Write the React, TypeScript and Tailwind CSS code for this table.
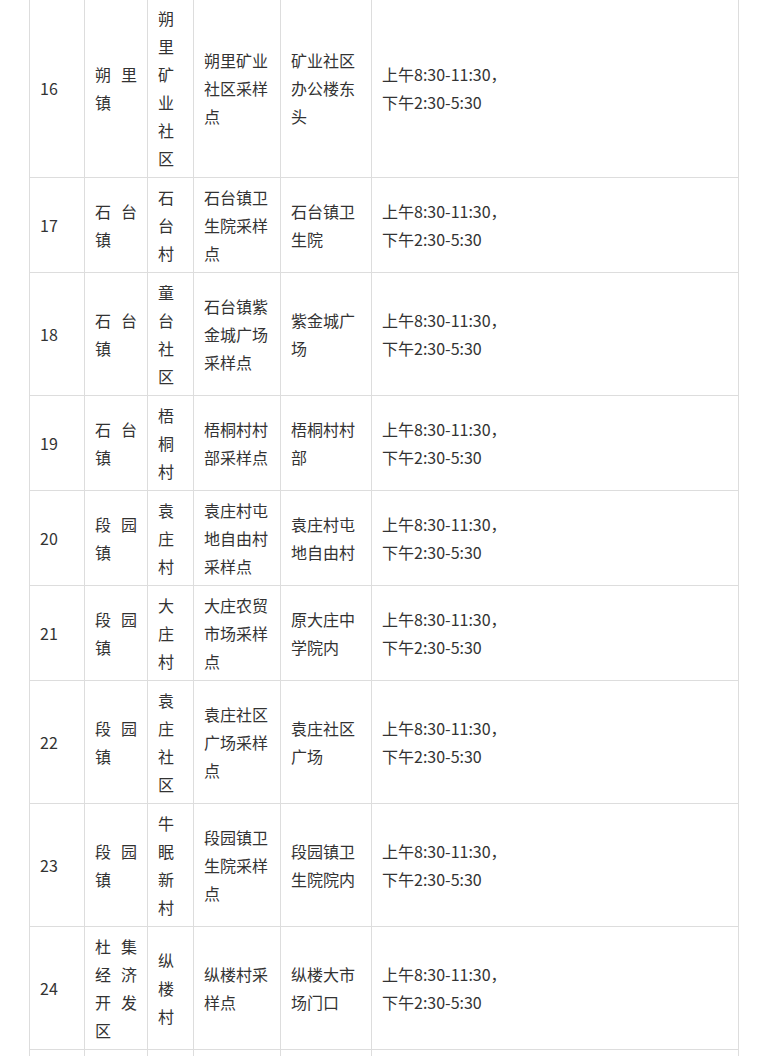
import React from "react";

type Row = [string, string, string, string, string];

const rows: Row[] = [
  ["16", "朔里镇", "朔里矿业社区", "朔里矿业社区采样点", "矿业社区办公楼东头"],
  ["17", "石台镇", "石台村", "石台镇卫生院采样点", "石台镇卫生院"],
  ["18", "石台镇", "童台社区", "石台镇紫金城广场采样点", "紫金城广场"],
  ["19", "石台镇", "梧桐村", "梧桐村村部采样点", "梧桐村村部"],
  ["20", "段园镇", "袁庄村", "袁庄村屯地自由村采样点", "袁庄村屯地自由村"],
  ["21", "段园镇", "大庄村", "大庄农贸市场采样点", "原大庄中学院内"],
  ["22", "段园镇", "袁庄社区", "袁庄社区广场采样点", "袁庄社区广场"],
  ["23", "段园镇", "牛眠新村", "段园镇卫生院采样点", "段园镇卫生院院内"],
  ["24", "杜集经济开发区", "纵楼村", "纵楼村采样点", "纵楼大市场门口"],
];

const cell =
  "border-r border-b border-[#dddddd] px-[10px] py-[5px] flex flex-col justify-center";

export default function App() {
  return (
    <div
      className="bg-white min-h-screen text-[16px] leading-[28px] text-[#333333]"
      style={{ fontFamily: '"Noto Sans CJK SC", "Noto Sans", sans-serif' }}
    >
      <div className="ml-[29px] -mt-px w-[710px] border-l border-[#dddddd] grid grid-cols-[55px_63px_46px_87px_91px_367px]">
        {rows.map((r) => (
          <React.Fragment key={r[0]}>
            <div className={cell}>{r[0]}</div>
            <div className={cell}>
              <div className="text-justify break-all">{r[1]}</div>
            </div>
            <div className={cell}>
              <div className="break-all">{r[2]}</div>
            </div>
            <div className={cell}>
              <div className="break-all">{r[3]}</div>
            </div>
            <div className={cell}>
              <div className="break-all">{r[4]}</div>
            </div>
            <div className={cell}>
              <div>上午8:30-11:30，</div>
              <div>下午2:30-5:30</div>
            </div>
          </React.Fragment>
        ))}
        <div className={cell + " h-[40px]"}></div>
        <div className={cell + " h-[40px]"}></div>
        <div className={cell + " h-[40px]"}></div>
        <div className={cell + " h-[40px]"}></div>
        <div className={cell + " h-[40px]"}></div>
        <div className={cell + " h-[40px]"}></div>
      </div>
    </div>
  );
}
